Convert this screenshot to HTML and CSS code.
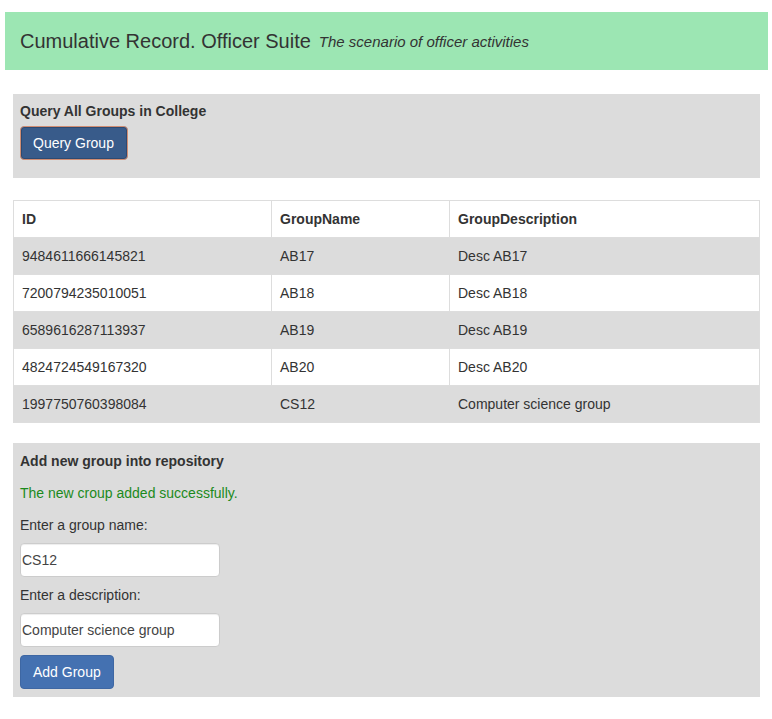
FILE: index.html
```html
<!DOCTYPE html>
<html>
<head>
<meta charset="utf-8">
<link rel="stylesheet" href="styles.css">
</head>
<body>
<header class="banner">
  <span class="title">Cumulative Record. Officer Suite</span>
  <span class="subtitle">The scenario of officer activities</span>
</header>

<section class="panel query">
  <div class="panel-title">Query All Groups in College</div>
  <button class="btn btn-dark">Query Group</button>
</section>

<table class="groups">
  <colgroup>
    <col class="c-id"><col class="c-name"><col class="c-desc">
  </colgroup>
  <thead>
    <tr><th>ID</th><th>GroupName</th><th>GroupDescription</th></tr>
  </thead>
  <tbody>
    <tr><td>9484611666145821</td><td>AB17</td><td>Desc AB17</td></tr>
    <tr><td>7200794235010051</td><td>AB18</td><td>Desc AB18</td></tr>
    <tr><td>6589616287113937</td><td>AB19</td><td>Desc AB19</td></tr>
    <tr><td>4824724549167320</td><td>AB20</td><td>Desc AB20</td></tr>
    <tr><td>1997750760398084</td><td>CS12</td><td>Computer science group</td></tr>
  </tbody>
</table>

<section class="panel add">
  <div class="panel-title">Add new group into repository</div>
  <div class="success">The new croup added successfully.</div>
  <label class="lbl">Enter a group name:</label>
  <input class="field" type="text" value="CS12">
  <label class="lbl">Enter a description:</label>
  <input class="field" type="text" value="Computer science group">
  <button class="btn btn-blue">Add Group</button>
</section>
</body>
</html>
```

FILE: styles.css
```css
html, body {
  margin: 0;
  padding: 0;
  background: #fff;
}
body {
  font-family: "Liberation Sans", Arial, sans-serif;
  font-size: 14px;
  line-height: 20px;
  color: #333;
}
.banner {
  margin: 12px 4px 0 5px;
  height: 58px;
  background: #9ce6b3;
  display: flex;
  align-items: center;
  padding-left: 15px;
  box-sizing: border-box;
}
.title {
  font-size: 20px;
  color: #333;
}
.subtitle {
  font-size: 15px;
  font-style: italic;
  margin-left: 8px;
  margin-top: 2px;
}
.panel {
  background: #dcdcdc;
  margin: 0 12px 0 13px;
  padding: 7px 7px;
  display: flex;
  flex-direction: column;
  align-items: flex-start;
}
.query {
  margin-top: 24px;
  padding-bottom: 18px;
}
.panel-title {
  font-weight: bold;
}
.btn {
  font-family: "Liberation Sans", Arial, sans-serif;
  font-size: 14px;
  line-height: 20px;
  padding: 6px 12px;
  border-radius: 4px;
  color: #fff;
  cursor: pointer;
}
.btn-dark {
  margin-top: 5px;
  padding: 6px 13px 6px 12px;
  background: #385b8a;
  border: 1px solid #d08d73;
  box-shadow: inset 0 0 0 1px #2d4a72;
}
.btn-blue {
  margin-top: 8px;
  background: #4471b1;
  border: 1px solid #3e67a3;
}
.groups {
  margin: 22px 12px 0 13px;
  width: calc(100% - 25px);
  border-collapse: collapse;
  border: 1px solid #ddd;
  table-layout: fixed;
}
.c-id { width: 258px; }
.c-name { width: 178px; }
.groups th, .groups td {
  text-align: left;
  padding: 8px 8px;
  line-height: 20px;
  border-top: 1px solid #ddd;
  border-left: 1px solid #ddd;
}
.groups th {
  font-weight: bold;
  height: 20px;
}
.groups tbody tr:nth-child(odd) td {
  background: #dcdcdc;
  border-left-color: #dcdcdc;
}
.add {
  margin-top: 20px;
  padding-top: 8px;
  padding-bottom: 8px;
}
.success {
  color: #1b8a1b;
  margin-top: 12px;
}
.lbl {
  margin-top: 12px;
}
.field {
  margin-top: 8px;
  width: 200px;
  height: 34px;
  box-sizing: border-box;
  border: 1px solid #ccc;
  border-radius: 4px;
  padding: 0 1px;
  font-family: "Liberation Sans", Arial, sans-serif;
  font-size: 14px;
  color: #444;
  background: #fff;
  box-shadow: inset 0 1px 1px rgba(0,0,0,0.075);
}
.field + .lbl {
  margin-top: 8px;
}
```
